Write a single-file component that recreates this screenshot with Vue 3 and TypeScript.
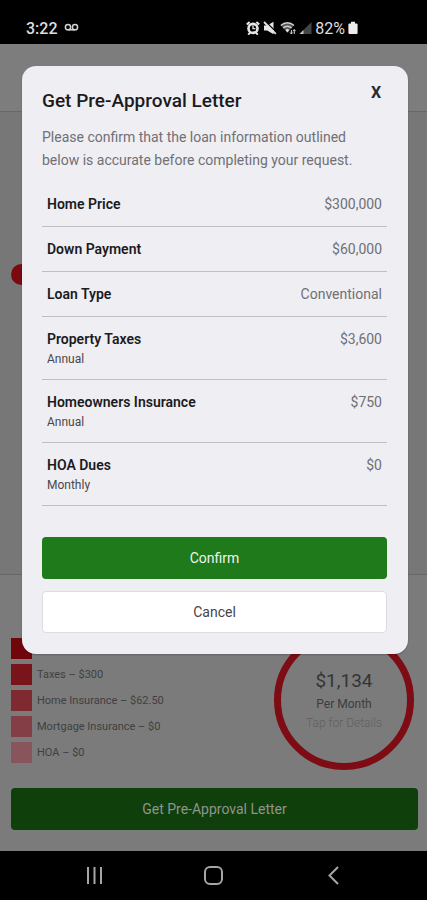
<script setup lang="ts">
interface LoanField {
  label: string
  value: string
  period?: string
}

interface CostItem {
  label: string
  color: string
}

const fields: LoanField[] = [
  { label: 'Home Price', value: '$300,000' },
  { label: 'Down Payment', value: '$60,000' },
  { label: 'Loan Type', value: 'Conventional' },
  { label: 'Property Taxes', value: '$3,600', period: 'Annual' },
  { label: 'Homeowners Insurance', value: '$750', period: 'Annual' },
  { label: 'HOA Dues', value: '$0', period: 'Monthly' },
]

const costs: CostItem[] = [
  { label: '', color: '#6f060c' },
  { label: 'Taxes – $300', color: '#78151a' },
  { label: 'Home Insurance – $62.50', color: '#7f2a30' },
  { label: 'Mortgage Insurance – $0', color: '#843f46' },
  { label: 'HOA – $0', color: '#87555b' },
]
</script>

<template>
  <div class="screen">
    <header class="status">
      <div class="status-group">
        <span class="clock">3:22</span>
        <svg width="15" height="10" viewBox="0 0 15 10" fill="none" stroke="#d4d4d4" stroke-width="1.5">
          <circle cx="4" cy="4.2" r="2.6" />
          <circle cx="11" cy="4.2" r="2.6" />
          <path d="M4 6.8h7" />
        </svg>
      </div>
      <div class="status-group right">
        <svg width="14" height="14" viewBox="0 0 14 14">
          <circle cx="7" cy="7.4" r="5.8" fill="#e6e6e6" />
          <path d="M.8 3.6 3.6 1M13.2 3.6 10.4 1M2.2 13.6l2-2M11.8 13.6l-2-2" stroke="#e6e6e6" stroke-width="2" />
          <circle cx="7" cy="7.4" r="3.2" fill="#000" />
          <path d="M7 4.6v3h2.4" fill="none" stroke="#e6e6e6" stroke-width="1.3" />
        </svg>
        <svg width="14" height="14" viewBox="0 0 14 14">
          <path d="M1 4.6h3.2L10.500 .8v12.4L4.200 9.600H1z" fill="#e6e6e6" />
          <path d="M2.200 .2 13.600 11.600" stroke="#000" stroke-width="1.4" />
          <path d="M1 1 12.800 12.800" stroke="#e6e6e6" stroke-width="1.8" />
        </svg>
        <svg width="16" height="14" viewBox="0 0 16 14" fill="none">
          <path d="M1 4.400C4.600 .8 10.200 .8 13.800 4.400L7.400 11.400z" fill="#555" />
          <path d="M.8 4.400C4.600 .8 10.200 .8 14 4.400M3.200 7c2.400-2.300 6-2.300 8.400 0" stroke="#cfcfcf" stroke-width="1.400" />
          <path d="m5.400 9 2-1.200 2 1.200-2 2.600z" fill="#e0e0e0" />
          <path d="M11.400 13V9M9.900 11.400l1.500 1.600 1.500-1.600M14.300 13V8.600M12.900 10.200l1.400-1.600 1.400 1.600" stroke="#cfcfcf" />
        </svg>
        <svg width="13" height="14" viewBox="0 0 13 14">
          <path d="M12.500 1v12H.5z" fill="#454545" />
          <path d="M4.500 9v4h-4z" fill="#c4c4c4" />
        </svg>
        <span class="percent">82%</span>
        <svg width="10" height="14" viewBox="0 0 10 14">
          <path d="M3 .8h4v1.700h1.600a1 1 0 0 1 1 1v8.500a1 1 0 0 1-1 1H1.400a1 1 0 0 1-1-1V3.500a1 1 0 0 1 1-1H3z" fill="#ededed" />
        </svg>
      </div>
    </header>

    <div class="viewport">
      <main class="page">
        <div class="topbar"></div>
        <section class="calculator"><span class="thumb"></span></section>
        <section class="summary">
          <div class="breakdown">
            <ul class="costs">
              <li v-for="cost in costs" :key="cost.color">
                <span class="swatch" :style="{ background: cost.color }"></span>{{ cost.label }}
              </li>
            </ul>
            <button class="payment" type="button">
              <strong>$1,134</strong>
              <span class="per">Per Month</span>
              <span class="hint">Tap for Details</span>
            </button>
          </div>
          <button class="button dimmed" type="button">Get Pre-Approval Letter</button>
        </section>
      </main>

      <div class="overlay">
        <section class="dialog" role="dialog" aria-labelledby="dialog-title">
          <div class="dialog-head">
            <h1 id="dialog-title">Get Pre-Approval Letter</h1>
            <button class="close" type="button">X</button>
          </div>
          <p>Please confirm that the loan information outlined below is accurate before completing your request.</p>
          <table>
            <tbody>
              <tr v-for="field in fields" :key="field.label">
                <th scope="row">
                  {{ field.label }}
                  <small v-if="field.period">{{ field.period }}</small>
                </th>
                <td>{{ field.value }}</td>
              </tr>
            </tbody>
          </table>
          <div class="actions">
            <button class="button confirm" type="button">Confirm</button>
            <button class="button cancel" type="button">Cancel</button>
          </div>
        </section>
      </div>
    </div>

    <nav class="navbar">
      <button type="button" aria-label="Recent apps">
        <svg width="20" height="20" viewBox="0 0 20 20" stroke="#a6a6a6" stroke-width="2">
          <path d="M4 1v17M10.500 1v17M17 1v17" />
        </svg>
      </button>
      <button type="button" aria-label="Home">
        <svg width="20" height="20" viewBox="0 0 20 20" fill="none" stroke="#a6a6a6" stroke-width="2">
          <rect x="2" y="1" width="17" height="17" rx="5" />
        </svg>
      </button>
      <button type="button" aria-label="Back">
        <svg width="20" height="20" viewBox="0 0 20 20" fill="none" stroke="#a6a6a6" stroke-width="2">
          <path d="M15 1 6.500 9.500 15 18" />
        </svg>
      </button>
    </nav>
  </div>
</template>

<style>
body {
  background: #000;
}
</style>

<style scoped>
* {
  box-sizing: border-box;
}

button {
  font: inherit;
  border: 0;
  padding: 0;
  background: none;
  color: inherit;
}

.screen {
  display: flex;
  flex-direction: column;
  min-height: 100vh;
  font-family: Roboto, 'Liberation Sans', sans-serif;
  font-size: 14px;
}

.status {
  display: flex;
  justify-content: space-between;
  height: 44px;
  padding: 12px 69px 0 26px;
  color: #dedede;
}

.status-group {
  display: flex;
  align-items: center;
  gap: 6px;
  height: 32px;
}

.status-group.right {
  gap: 3px;
}

.clock {
  font-size: 16px;
  font-weight: 500;
}

.percent {
  font-size: 16px;
}

.viewport {
  position: relative;
  display: flex;
  flex: 1;
}

.page {
  display: flex;
  flex-direction: column;
  flex: 1;
  background: #777;
}

.topbar {
  height: 68px;
  background: #7d7d7d;
  border-bottom: 1px solid #686868;
}

.calculator {
  flex: 1;
  padding: 152px 11px 0;
}

.thumb {
  display: block;
  width: 21px;
  height: 21px;
  border-radius: 50%;
  background: #7a0a10;
}

.summary {
  padding: 55px 9px 21px 11px;
  background: #7b7b7b;
  border-top: 1px solid #676767;
}

.breakdown {
  display: flex;
  align-items: center;
  justify-content: space-between;
  padding-right: 4px;
  margin-bottom: 18px;
}

.costs {
  display: grid;
  gap: 5px;
  margin: 0;
  padding: 0;
  list-style: none;
  font-size: 11px;
  color: #404040;
}

.costs li {
  display: flex;
  align-items: center;
  gap: 5px;
  height: 21px;
}

.swatch {
  width: 21px;
  height: 21px;
}

.payment {
  display: flex;
  flex-direction: column;
  align-items: center;
  width: 140px;
  height: 140px;
  padding-top: 31px;
  border: 7px solid #7d0c14;
  border-radius: 50%;
}

.payment strong {
  font-size: 19px;
  font-weight: 400;
  line-height: 26px;
  color: #343434;
}

.per {
  font-size: 12px;
  line-height: 20px;
  color: #3c3c3c;
}

.hint {
  font-size: 12px;
  font-weight: 300;
  line-height: 18px;
  color: #606060;
}

.button {
  display: block;
  width: 100%;
  height: 42px;
  border-radius: 4px;
  font-size: 14px;
}

.dimmed {
  background: #0f3f0b;
  color: #8f948f;
}

.overlay {
  position: absolute;
  inset: 0;
  padding: 22px 19px 0 22px;
}

.dialog {
  padding: 20px 21px 21px 20px;
  border-radius: 14px;
  background: #efeef3;
  box-shadow: 0 1px 2px #0003;
}

.dialog-head {
  display: flex;
  justify-content: space-between;
}

h1 {
  margin: 0;
  font-size: 19px;
  font-weight: 500;
  line-height: 30px;
  color: #1b1b1e;
}

.close {
  width: 22px;
  height: 14px;
  font-size: 16px;
  font-weight: 700;
  line-height: 14px;
  color: #2b2b2d;
}

p {
  margin: 10px 0;
  padding-right: 24px;
  font-size: 14px;
  line-height: 23px;
  color: #707075;
}

table {
  width: 100%;
  border-collapse: collapse;
}

tr {
  border-bottom: 1px solid #bfbec4;
}

th,
td {
  padding: 12px 5px;
  font-size: 14px;
  line-height: 20px;
  vertical-align: top;
}

th {
  font-weight: 600;
  text-align: left;
  color: #1b1b1e;
}

td {
  text-align: right;
  color: #707075;
}

small {
  display: block;
  margin-bottom: -2px;
  font-size: 12px;
  font-weight: 400;
  line-height: 20px;
  color: #48484c;
}

.actions {
  display: grid;
  gap: 12px;
  margin-top: 31px;
}

.confirm {
  background: #1f7a1b;
  color: #eef4ee;
}

.cancel {
  border: 1px solid #dddce1;
  background: #fff;
  color: #454548;
}

.navbar {
  display: grid;
  grid-template-columns: repeat(3, 1fr);
  height: 49px;
  padding: 0 34px;
  background: #000;
}

.navbar button {
  display: flex;
  align-items: center;
  justify-content: center;
}
</style>
